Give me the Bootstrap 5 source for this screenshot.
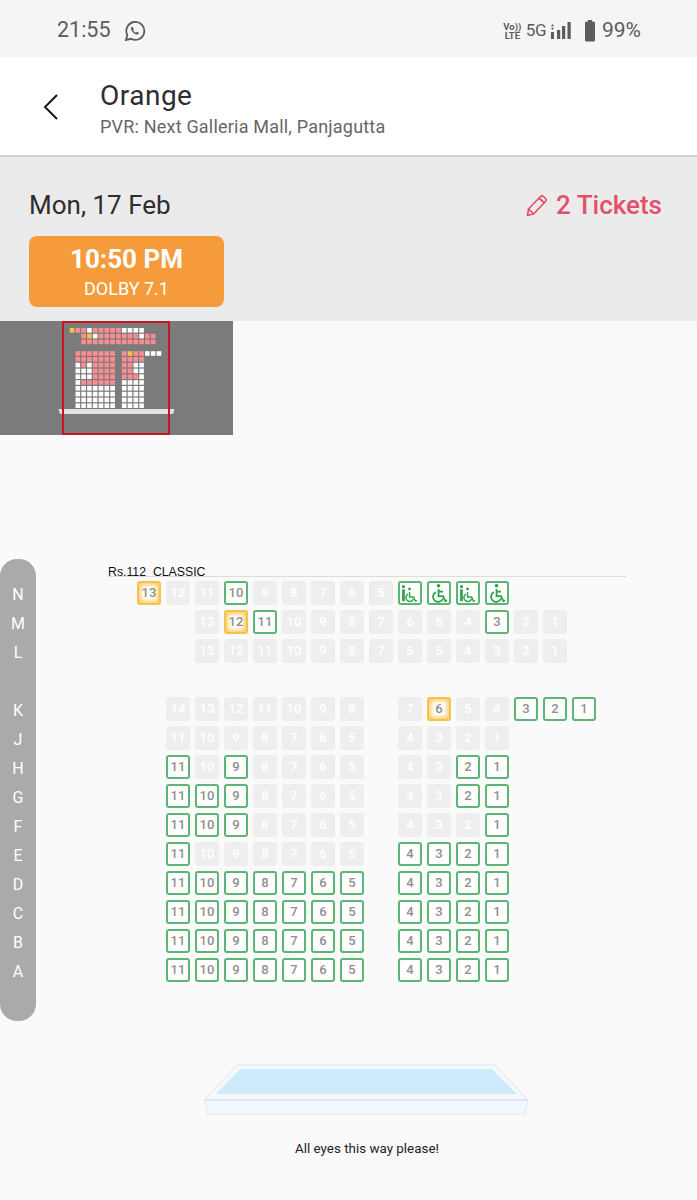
<!DOCTYPE html>
<html lang="en">
<head>
<meta charset="UTF-8">
<meta name="viewport" content="width=device-width, initial-scale=1.0">
<title>Select seats</title>
<link rel="stylesheet" href="https://cdn.jsdelivr.net/npm/bootstrap@5.3.0/dist/css/bootstrap.min.css">
<style>
body { background: #fafafa; font-family: Roboto, "Liberation Sans", sans-serif; color: #2b2b2b; height: 1200px; overflow: hidden; }
.status-bar { height: 57px; background: #f5f5f5; color: #5c5c5c; padding: 4px 56px 0 57px; font-size: 21.5px; }
.status-left { gap: 13px; }
.lte-mark { font-size: 9.5px; line-height: 9px; font-weight: 700; text-align: center; width: 19px; }
.fiveg { font-size: 17px; letter-spacing: -.5px; }
.batt-icon { margin-left: 12px; }
.batt-text { margin-left: 6px; font-size: 21px; }
.top-bar { height: 100px; background: #fff; border-bottom: 2px solid #c9d6e2; padding-left: 42px; }
.back-btn { width: 58px; padding-top: 2px; }
.film-block { padding-top: 22px; }
.film-title { font-size: 28px; line-height: 34px; letter-spacing: .5px; color: #2e2e2e; }
.film-venue { font-size: 18px; line-height: 22px; margin-top: 3px; color: #666; letter-spacing: .2px; }
.date-band { height: 164px; background: #ebebeb; padding: 32px 35px 0 29px; }
.date-text { font-size: 26px; line-height: 32px; color: #2e2e2e; }
.ticket-edit { font-size: 26px; line-height: 32px; font-weight: 500; color: #e4506a; }
.time-chip { width: 195px; height: 71px; margin-top: 15px; background: #f59b3c; border-radius: 8px; color: #fff; }
.time-main { font-size: 26px; line-height: 30px; font-weight: 700; }
.time-tag { font-size: 18px; line-height: 22px; margin-top: 4px; }
.mini-map { position: relative; width: 233px; height: 114px; background: #7b7b7b; }
.mini-frame { position: absolute; left: 62px; top: 0; width: 108px; height: 114px; border: 2px solid #c9151e; }
.seat-zone { margin-top: 124px; }
.row-rail { width: 36px; height: 462px; padding-top: 21px; background: #aaa; border-radius: 17px; color: #fff; font-size: 16px; text-align: center; flex-shrink: 0; }
.row-rail div { height: 29px; line-height: 29px; }
.seat-wrap { margin-left: 72px; width: 518px; }
.price-head { height: 18px; border-bottom: 1px solid #ddd; font-family: "Liberation Sans", sans-serif; font-size: 12.3px; line-height: 26px; color: #111; white-space: nowrap; }
.seat-grid { display: grid; grid-template-columns: repeat(16, 24px); grid-auto-rows: 24px; gap: 5px; margin: 4px 0 0 29px; }
.seat-cell { border-radius: 3px; font-size: 13px; font-weight: 500; display: flex; align-items: center; justify-content: center; }
.seat-x { background: #eee; color: #fff; }
.seat-a { background: #fff; border: 2px solid #5cb577; color: #8f8f8f; }
.seat-s { background: #fff; border: 2px solid #f6c34a; box-shadow: inset 0 0 4px 2px #f8cc60; color: #8f8f8f; }
.screen-box { margin: 43px 0 0 204px; width: 325px; }
.screen-text { margin: 24px 0 0 91px; width: 143px; font-size: 13.4px; line-height: 20px; white-space: nowrap; color: #222; text-align: center; }
</style>
</head>
<body>

<div class="status-bar d-flex align-items-center justify-content-between">
    <div class="status-left d-flex align-items-center">
        <span>21:55</span>
        <svg width="22" height="22" viewBox="0 0 22 22" fill="none" stroke="#5c5c5c" stroke-width="1.8">
            <path d="M2 20l1.3-5A9 9 0 1 1 7 18.8z"/>
            <path d="M8 6.5c-1.2.8-1.3 2.5-.3 4.2 1.1 1.9 3 3.600 5 3.900 1.200.1 2.300-.8 2.300-1.900l-2.200-1-.9 1c-1.200-.5-2.300-1.600-2.800-2.800l.9-.9z" fill="#5c5c5c" stroke="none"/>
        </svg>
    </div>
    <div class="d-flex align-items-center">
        <div class="lte-mark">Vo))<br>LTE</div>
        <span class="fiveg ms-1">5G</span>
        <svg class="ms-1" width="22" height="22" viewBox="0 0 22 22" fill="#5c5c5c">
            <path d="M2.500 4l1.500 2.200H1zM2.500 10L1 7.800h3z"/>
            <rect x="1" y="12" width="3" height="7"/><rect x="7" y="10" width="3.200" height="9"/><rect x="12" y="6" width="3.200" height="13"/><rect x="17.500" y="2" width="3.200" height="17"/>
        </svg>
        <svg class="batt-icon" width="12" height="24" viewBox="0 0 12 24" fill="#5c5c5c">
            <rect x="4" y="1" width="4" height="2"/><rect x="1" y="2.500" width="10" height="20" rx="1.500"/>
        </svg>
        <span class="batt-text">99%</span>
    </div>
</div>

<div class="top-bar d-flex align-items-center">
    <div class="back-btn">
        <svg class="d-block" width="18" height="28" viewBox="0 0 18 28" fill="none" stroke="#111" stroke-width="1.900">
            <path d="M15 2L3 14l12 12"/>
        </svg>
    </div>
    <div class="film-block align-self-start">
        <div class="film-title">Orange</div>
        <div class="film-venue">PVR: Next Galleria Mall, Panjagutta</div>
    </div>
</div>

<div class="date-band">
    <div class="d-flex align-items-center justify-content-between">
        <div class="date-text">Mon, 17 Feb</div>
        <div class="ticket-edit d-flex align-items-center gap-2">
            <svg width="22" height="23" viewBox="0 0 22 23" fill="none" stroke="#e4506a" stroke-width="1.700" stroke-linejoin="round">
                <path d="M1.500 21.500l1-6.500L14.500 2.500q1.500-1.300 3 0l2 2q1.300 1.500 0 3L7.500 20z"/><path d="M2.500 15l5 5M13 4l5.500 5"/>
            </svg>
            <span>2 Tickets</span>
        </div>
    </div>
    <div class="time-chip d-flex flex-column align-items-center justify-content-center">
        <div class="time-main">10:50 PM</div>
        <div class="time-tag">DOLBY 7.1</div>
    </div>
</div>

<div class="mini-map">
    <svg class="d-block" id="miniSvg" width="233" height="114" viewBox="0 0 233 114"></svg>
    <div class="mini-frame"></div>
</div>

<div class="seat-zone d-flex">
    <div class="row-rail" id="rowRail"></div>
    <div class="seat-wrap">
        <div class="price-head">Rs.112&nbsp; CLASSIC</div>
        <div class="seat-grid" id="seatGrid"></div>
    </div>
</div>

<div class="screen-box">
    <svg class="d-block" width="325" height="51" viewBox="0 0 325 51">
        <path d="M.5 36L33 1h258l33 35z" fill="#f4f9fe" stroke="#dbe5f2"/>
        <path d="M12 30L36 5h252l25 25z" fill="#d0eafd"/>
        <path d="M.5 36h323.500l-3 14H3.500z" fill="#f1f7fe" stroke="#e1e8f3"/>
        <path d="M.5 36h323.500" fill="none" stroke="#dbe3f1" stroke-width="1.500"/>
    </svg>
    <div class="screen-text">All eyes this way please!</div>
</div>

<script>
// a = open, x = taken, s = picked, w1/w2 = wheelchair seats, - = gap
var rows = [
    ["N", "s13 x12 x11 a10 x9 x8 x7 x6 x5 w1 w2 w1 w2 - - -"],
    ["M", "- - x13 s12 a11 x10 x9 x8 x7 x6 x5 x4 a3 x2 x1 -"],
    ["L", "- - x13 x12 x11 x10 x9 x8 x7 x6 x5 x4 x3 x2 x1 -"],
    ["", "- - - - - - - - - - - - - - - -"],
    ["K", "- x14 x13 x12 x11 x10 x9 x8 - x7 s6 x5 x4 a3 a2 a1"],
    ["J", "- x11 x10 x9 x8 x7 x6 x5 - x4 x3 x2 x1 - - -"],
    ["H", "- a11 x10 a9 x8 x7 x6 x5 - x4 x3 a2 a1 - - -"],
    ["G", "- a11 a10 a9 x8 x7 x6 x5 - x4 x3 a2 a1 - - -"],
    ["F", "- a11 a10 a9 x8 x7 x6 x5 - x4 x3 x2 a1 - - -"],
    ["E", "- a11 x10 x9 x8 x7 x6 x5 - a4 a3 a2 a1 - - -"],
    ["D", "- a11 a10 a9 a8 a7 a6 a5 - a4 a3 a2 a1 - - -"],
    ["C", "- a11 a10 a9 a8 a7 a6 a5 - a4 a3 a2 a1 - - -"],
    ["B", "- a11 a10 a9 a8 a7 a6 a5 - a4 a3 a2 a1 - - -"],
    ["A", "- a11 a10 a9 a8 a7 a6 a5 - a4 a3 a2 a1 - - -"]
];

var chair = '<path d="M10.500 10v5.500h4.500l2 4.500 1.700-.7"/><path d="M8.800 12.200a4.300 4.300 0 1 0 6 5.300"/>';
var wheelIcons = {
    w1: '<svg width="20" height="20" viewBox="0 0 22 22" fill="none" stroke="#2ca24c" stroke-width="1.600"><circle cx="3.800" cy="4" r="1.700" fill="#2ca24c" stroke="none"/><path d="M3.800 7v13" stroke-width="3"/><circle cx="10.500" cy="6.500" r="1.500" fill="#2ca24c" stroke="none"/>' + chair + '</svg>',
    w2: '<svg width="20" height="20" viewBox="0 0 22 22" fill="none" stroke="#2ca24c" stroke-width="2"><circle cx="10.500" cy="3" r="2" fill="#2ca24c" stroke="none"/><path d="M10.500 6.500v8h5l2.500 5.500 2-.8M10.500 9.500h5"/><path d="M7.500 10a5.700 5.700 0 1 0 8 7"/></svg>'
};
var miniFill = { x: "#ff8c90", a: "#fff", s: "#f6c33f", w: "#fff" };

var rail = "", seats = "", mini = "";
rows.forEach(function (row, r) {
    rail += "<div>" + row[0] + "</div>";
    row[1].split(" ").forEach(function (tok, c) {
        var kind = tok.charAt(0);
        if (kind === "-") {
            seats += "<div></div>";
            return;
        }
        if (kind === "w") {
            seats += '<div class="seat-cell seat-a">' + wheelIcons[tok] + "</div>";
        } else {
            seats += '<div class="seat-cell seat-' + kind + '">' + tok.slice(1) + "</div>";
        }
        mini += '<rect x="' + (69.7 + c * 5.8) + '" y="' + (7 + r * 5.8) + '" width="4.6" height="4.6" fill="' + miniFill[kind] + '"/>';
    });
});
mini += '<path d="M58.500 88h116l-1.500 5H60z" fill="#e2e2e2"/>';
document.getElementById("rowRail").innerHTML = rail;
document.getElementById("seatGrid").innerHTML = seats;
document.getElementById("miniSvg").innerHTML = mini;
</script>
<script src="https://cdn.jsdelivr.net/npm/bootstrap@5.3.0/dist/js/bootstrap.bundle.min.js"></script>
</body>
</html>
